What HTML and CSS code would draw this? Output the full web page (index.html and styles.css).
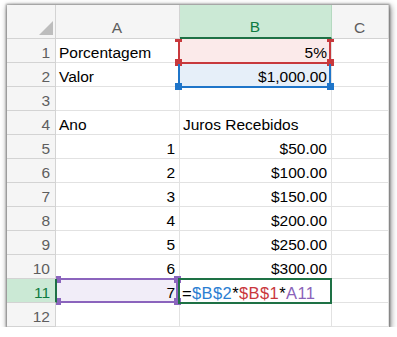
FILE: index.html
```html
<!DOCTYPE html>
<html>
<head>
<meta charset="utf-8">
<link rel="stylesheet" href="styles.css">
</head>
<body>
<div class="sheet">
  <div class="c hd corner"><svg class="tri" width="49" height="34" viewBox="0 0 49 34"><polygon points="46,16 46,30 32,30" fill="#bdbdbd"/></svg></div>
  <div class="c hd col">A</div>
  <div class="c hd col sel-col">B</div>
  <div class="c hd col">C</div>

  <div class="c hd rh">1</div><div class="c">Porcentagem</div><div class="c r fill-red">5%</div><div class="c"></div>
  <div class="c hd rh">2</div><div class="c">Valor</div><div class="c r fill-blue">$1,000.00</div><div class="c"></div>
  <div class="c hd rh">3</div><div class="c"></div><div class="c"></div><div class="c"></div>
  <div class="c hd rh">4</div><div class="c">Ano</div><div class="c">Juros Recebidos</div><div class="c"></div>
  <div class="c hd rh">5</div><div class="c r">1</div><div class="c r">$50.00</div><div class="c"></div>
  <div class="c hd rh">6</div><div class="c r">2</div><div class="c r">$100.00</div><div class="c"></div>
  <div class="c hd rh">7</div><div class="c r">3</div><div class="c r">$150.00</div><div class="c"></div>
  <div class="c hd rh">8</div><div class="c r">4</div><div class="c r">$200.00</div><div class="c"></div>
  <div class="c hd rh">9</div><div class="c r">5</div><div class="c r">$250.00</div><div class="c"></div>
  <div class="c hd rh">10</div><div class="c r">6</div><div class="c r">$300.00</div><div class="c"></div>
  <div class="c hd rh sel-row">11</div><div class="c r fill-purple">7</div><div class="c formula">=<span class="f-blue">$B$2</span>*<span class="f-red">$B$1</span>*<span class="f-purple">A11</span></div><div class="c"></div>
  <div class="c hd rh">12</div><div class="c"></div><div class="c"></div><div class="c"></div>

  <div class="ref ref-red">
    <span class="h h-tl"></span><span class="h h-tr"></span><span class="h h-bl"></span><span class="h h-br"></span>
  </div>
  <div class="ref ref-blue">
    <span class="h h-bl"></span><span class="h h-br"></span>
  </div>
  <div class="ref ref-purple">
    <span class="h h-tl"></span><span class="h h-tr"></span><span class="h h-bl"></span><span class="h h-br"></span>
  </div>
  <div class="active"></div>
</div>
</body>
</html>
```

FILE: styles.css
```css
html, body {
  margin: 0;
  padding: 0;
  background: #ffffff;
}

.sheet {
  position: relative;
  margin: 5px 0 0 7px;
  width: 382px;
  display: grid;
  grid-template-columns: 49px 124px 152px 57px;
  grid-template-rows: 34px repeat(12, 24px);
  background: #ffffff;
  box-shadow: 0 0 2px 1px rgba(0, 0, 0, 0.35), 1px 2px 6px 1px rgba(0, 0, 0, 0.45);
  font-family: "Liberation Sans", Arial, sans-serif;
  font-size: 15.5px;
  line-height: 18px;
  color: #000000;
}

.c {
  box-sizing: border-box;
  border-right: 1px solid #e2e2e2;
  border-bottom: 1px solid #e2e2e2;
  display: flex;
  align-items: flex-end;
  padding: 0 4px 0 3px;
  white-space: nowrap;
  min-width: 0;
}

.r {
  justify-content: flex-end;
}

.hd {
  position: relative;
  z-index: 3;
  background: #f5f5f5;
  color: #5e5e5e;
  border-right-color: #d3d3d3;
  border-bottom-color: #d3d3d3;
}

.col {
  justify-content: center;
  padding-bottom: 1px;
}

.corner {
  padding: 0;
  position: relative;
}

.tri {
  position: absolute;
  left: 0;
  top: 0;
}

.rh {
  justify-content: flex-end;
  padding-right: 5px;
}

.sel-col {
  background: #cbe9d5;
  color: #107c41;
  border-bottom: 2px solid #1e7145;
  border-right-color: #b5d9c0;
}

.sel-row {
  background: #cbe9d5;
  color: #107c41;
  border-right: 2px solid #1e7145;
  margin-right: -1px;
}

.fill-red { background: #fbeaea; }
.fill-blue { background: #e6eff9; }
.fill-purple { background: #f1edf8; }

.formula {
  font-size: 16.5px;
  letter-spacing: 0.4px;
  padding-left: 2px;
}

.f-blue { color: #2a7ed2; }
.f-red { color: #c9373d; }
.f-purple { color: #8a63b9; }

.ref {
  position: absolute;
  box-sizing: border-box;
  z-index: 2;
  border-style: solid;
  border-width: 0 2px 2px 2px;
}

.ref-red {
  left: 171px;
  top: 33px;
  width: 153px;
  height: 26px;
  border-color: #c8393d;
}

.ref-blue {
  left: 171px;
  top: 59px;
  width: 153px;
  height: 24px;
  border-color: #1f75c9;
}

.ref-purple {
  left: 50px;
  top: 273px;
  width: 121px;
  height: 25px;
  border-width: 2px 2px 2px 0;
  border-color: #8b64bd;
}

.h {
  position: absolute;
  width: 7px;
  height: 7px;
}

.ref-red .h { background: #c8393d; }
.ref-blue .h { background: #1f75c9; }
.ref-purple .h { background: #8b64bd; }

.h-tl { left: -5px; top: -3px; }
.h-tr { right: -5px; top: -3px; }
.h-bl { left: -5px; bottom: -4px; }
.h-br { right: -5px; bottom: -4px; }

.ref-purple .h-tl, .ref-purple .h-bl { left: -3px; }
.ref-purple .h-tl { top: -4px; }
.ref-purple .h-tr { top: -4px; }

.active {
  position: absolute;
  z-index: 4;
  left: 171px;
  top: 273px;
  width: 154px;
  height: 26px;
  box-sizing: border-box;
  border: 2px solid #1e7145;
}
```
